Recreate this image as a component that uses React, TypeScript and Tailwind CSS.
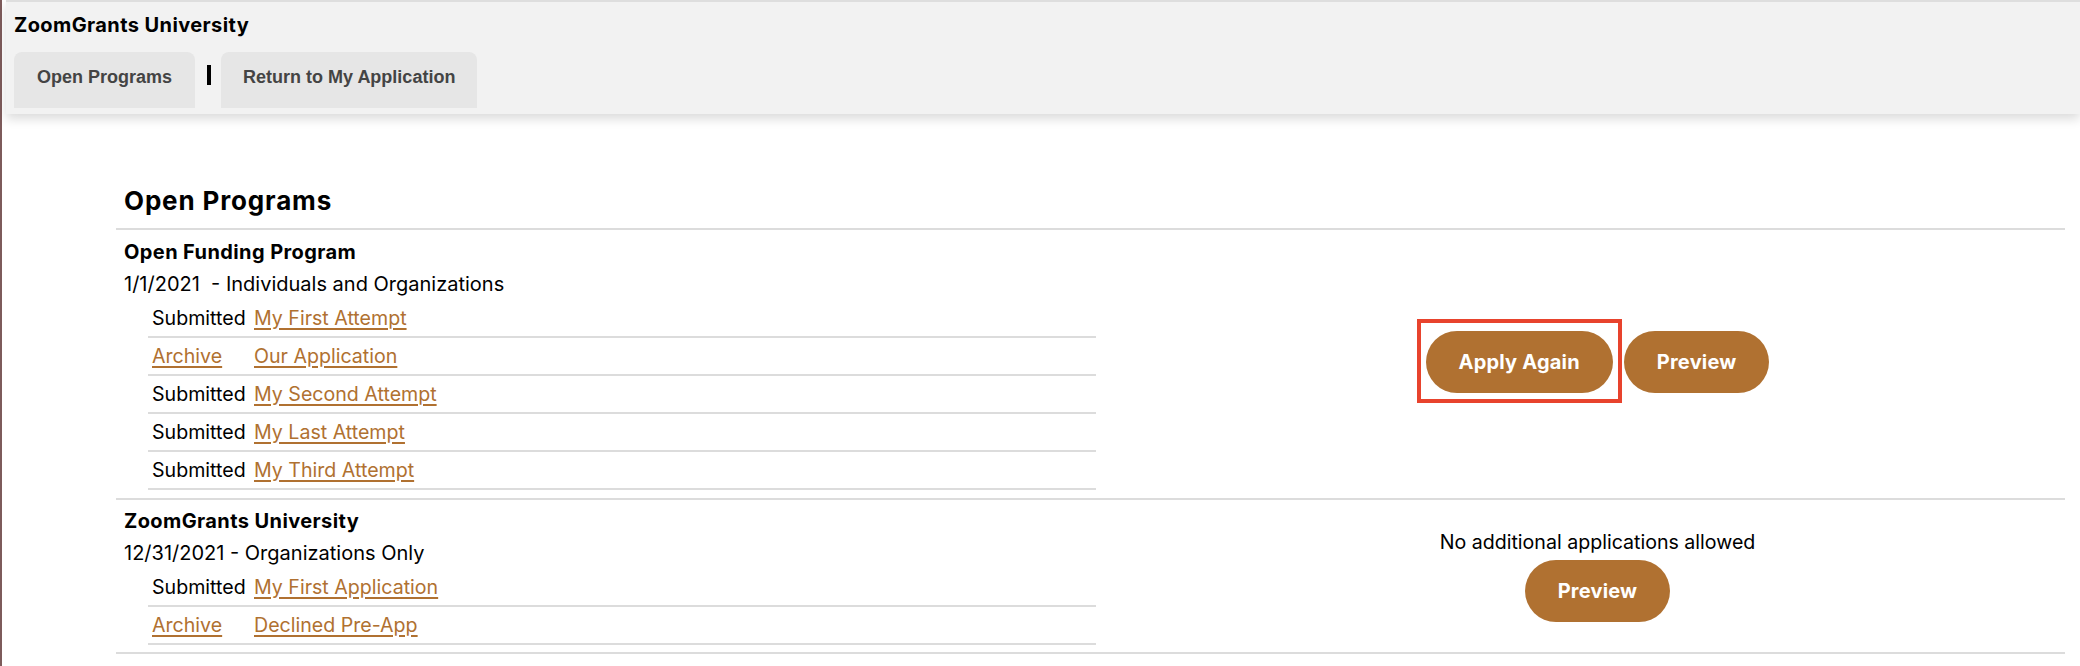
import React from "react";

type Row = { archive?: boolean; status?: string; link: string };

const section1: Row[] = [
  { status: "Submitted", link: "My First Attempt" },
  { archive: true, link: "Our Application" },
  { status: "Submitted", link: "My Second Attempt" },
  { status: "Submitted", link: "My Last Attempt" },
  { status: "Submitted", link: "My Third Attempt" },
];

const section2: Row[] = [
  { status: "Submitted", link: "My First Application" },
  { archive: true, link: "Declined Pre-App" },
];

function Link({ children }: { children: React.ReactNode }) {
  return (
    <a href="#" className="text-[#b07131] underline decoration-[1.5px] underline-offset-[3px]">
      {children}
    </a>
  );
}

function SubTable({ rows }: { rows: Row[] }) {
  return (
    <div className="ml-[24px] w-[948px] text-[19.6px]">
      {rows.map((r, i) => (
        <div key={i} className="flex h-[38px] items-center border-b-2 border-[#dcdcdc] leading-[23px]">
          <div className="w-[102px] pl-[4px]">
            {r.archive ? <Link>Archive</Link> : <span>{r.status}</span>}
          </div>
          <div className="pl-[4px]">
            <Link>{r.link}</Link>
          </div>
        </div>
      ))}
    </div>
  );
}

function Button({ children }: { children: React.ReactNode }) {
  return (
    <button className="flex h-[62px] items-center rounded-full bg-[#b07131] px-[33px] text-[20px] font-bold leading-[24px] tracking-[0.2px] text-white">
      {children}
    </button>
  );
}

export default function App() {
  return (
    <div className="flex min-h-[666px] bg-white font-['Inter',sans-serif] text-[19.6px] text-black">
      <div className="w-[2px] shrink-0 bg-[#7d5b5b]" />
      <div className="w-[4px] shrink-0" />
      <div className="flex-1">
        <header className="relative z-10 border-t-2 border-[#dedede] bg-[#f2f2f2] pb-[6px] pl-[8px] pt-[12px] shadow-[0_5px_10px_rgba(0,0,0,0.14)]">
          <div className="text-[20px] font-bold leading-[23px] tracking-[0.4px] text-black">ZoomGrants University</div>
          <nav className="mt-[15px] flex items-start font-['Liberation_Sans',Arial,sans-serif] text-[18px] font-bold text-[#444444]">
            <div className="h-[56px] rounded-t-[8px] bg-[#e6e6e6] px-[23px] pt-[15px] leading-[21px]">Open Programs</div>
            <div className="ml-[12px] mt-[13px] h-[20px] w-[4px] bg-black" />
            <div className="ml-[10px] h-[56px] rounded-t-[8px] bg-[#e6e6e6] px-[22px] pt-[15px] leading-[21px]">
              Return to My Application
            </div>
          </nav>
        </header>

        <main className="pl-[110px] pr-[15px] pt-[72px]">
          <h1 className="border-b-2 border-[#dcdcdc] pb-[12px] pl-[8px] text-[26px] font-bold leading-[30px] tracking-[0.85px]">
            Open Programs
          </h1>

          <div className="flex border-b-2 border-[#dcdcdc]">
            <div className="w-[1014px] shrink-0 pb-[8px] pl-[8px] pt-[6px]">
              <div className="text-[20px] font-bold leading-[32px] tracking-[0.4px]">Open Funding Program</div>
              <div className="whitespace-pre text-[20px] leading-[32px]">1/1/2021  - Individuals and Organizations</div>
              <SubTable rows={section1} />
            </div>
            <div className="flex flex-1 items-center justify-center pb-[4px]">
              <div className="flex items-center gap-[11px]">
                <div className="relative">
                  <Button>Apply Again</Button>
                  <span className="pointer-events-none absolute -bottom-[10px] -left-[9px] -right-[9px] -top-[12px] border-[4px] border-[#e8432d]" />
                </div>
                <Button>Preview</Button>
              </div>
            </div>
          </div>

          <div className="flex border-b-2 border-[#dcdcdc]">
            <div className="w-[1014px] shrink-0 pb-[7px] pl-[8px] pt-[5px]">
              <div className="text-[20px] font-bold leading-[32px] tracking-[0.4px]">ZoomGrants University</div>
              <div className="text-[20px] leading-[32px]">12/31/2021 - Organizations Only</div>
              <SubTable rows={section2} />
            </div>
            <div className="flex flex-1 items-center justify-center">
              <div className="flex flex-col items-center">
                <div className="mb-[6px] leading-[23px]">No additional applications allowed</div>
                <Button>Preview</Button>
              </div>
            </div>
          </div>
        </main>
      </div>
    </div>
  );
}
